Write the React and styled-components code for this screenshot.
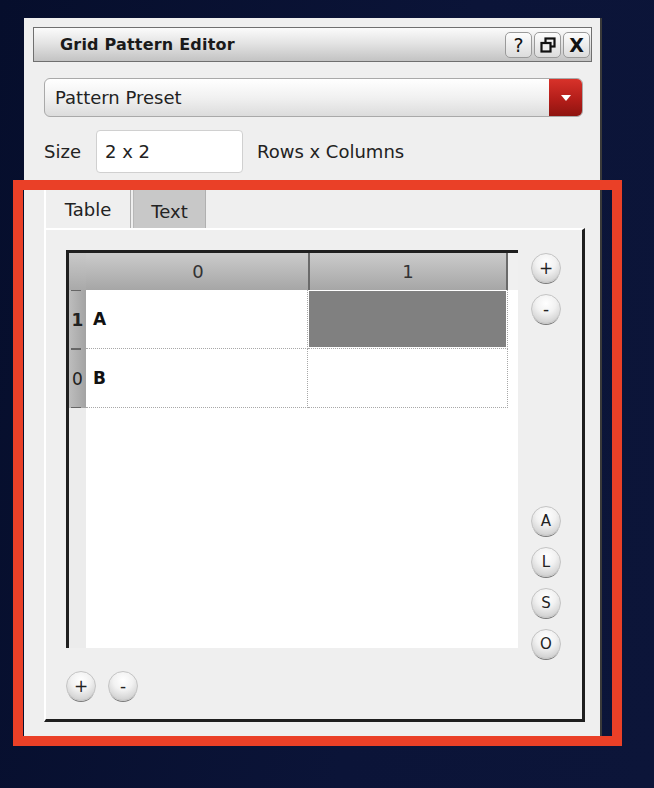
import React from "react";
import styled, { createGlobalStyle } from "styled-components";

const GlobalStyle = createGlobalStyle`
  html, body {
    margin: 0;
    padding: 0;
    min-height: 788px;
    background: linear-gradient(100deg, #060e2c 0%, #0b1438 60%, #0c1539 100%);
    font-family: "DejaVu Sans", "Liberation Sans", sans-serif;
  }
`;

const Page = styled.div`
  position: relative;
  width: 654px;
  height: 788px;
  padding: 18px 0 0 24px;
  box-sizing: border-box;
`;

const Panel = styled.div`
  width: 578px;
  height: 720px;
  box-sizing: border-box;
  background: #efefef;
  border-right: 2px solid #3a3a3a;
  display: flex;
  flex-direction: column;
`;

const TitleBar = styled.div`
  margin: 9px 8px 0 9px;
  height: 35px;
  box-sizing: border-box;
  border: 1px solid #6f6f6f;
  background: linear-gradient(#fbfbfb, #e4e4e4 45%, #c3c3c3);
  display: flex;
  align-items: center;
  padding: 0 1px 0 26px;
`;

const Title = styled.div`
  flex: 1;
  font-weight: bold;
  font-size: 16px;
  color: #1a1a1a;
  letter-spacing: 0.2px;
`;

const TitleButtons = styled.div`
  display: flex;
  gap: 2px;
`;

const TitleButton = styled.div`
  width: 27px;
  height: 26px;
  box-sizing: border-box;
  border: 1px solid #9a9a9a;
  border-radius: 5px;
  background: linear-gradient(#fdfdfd, #dcdcdc);
  display: flex;
  align-items: center;
  justify-content: center;
  font-size: 19px;
  font-weight: ${(p) => (p.$bold ? "bold" : "normal")};
  color: #111;
`;

const Body = styled.div`
  padding: 16px 15px 0 20px;
  display: flex;
  flex-direction: column;
  flex: 1;
`;

const Dropdown = styled.div`
  height: 39px;
  margin-right: 2px;
  box-sizing: border-box;
  border: 1px solid #a9a9a9;
  border-radius: 6px;
  background: linear-gradient(#ffffff, #f1f1f1 50%, #dcdcdc);
  display: flex;
  align-items: stretch;
  overflow: hidden;
`;

const DropdownLabel = styled.div`
  flex: 1;
  display: flex;
  align-items: center;
  padding-left: 10px;
  font-size: 18px;
  color: #222;
`;

const DropdownArrow = styled.div`
  width: 33px;
  background: linear-gradient(#d8322a, #b01c18 60%, #8e1410);
  display: flex;
  align-items: center;
  justify-content: center;
`;

const SizeRow = styled.div`
  margin-top: 13px;
  display: flex;
  align-items: center;
  font-size: 18px;
  color: #222;
`;

const SizeInput = styled.div`
  width: 147px;
  height: 43px;
  box-sizing: border-box;
  margin: 0 14px 0 15px;
  background: #fff;
  border: 1px solid #d0d0d0;
  border-radius: 4px;
  display: flex;
  align-items: center;
  padding-left: 8px;
`;

const Tabs = styled.div`
  margin-top: 17px;
  display: flex;
  gap: 2px;
  height: 38px;
`;

const Tab = styled.div`
  width: ${(p) => p.$w}px;
  box-sizing: border-box;
  display: flex;
  align-items: center;
  justify-content: center;
  font-size: 18px;
  color: #222;
  background: ${(p) => (p.$active ? "#efefef" : "#c8c8c8")};
  border-left: ${(p) => (p.$active ? "2px solid #fff" : "1px solid #b8b8b8")};
  border-right: 1px solid #b0b0b0;
  padding-top: ${(p) => (p.$active ? 0 : 4)}px;
`;

const Pane = styled.div`
  height: 494px;
  box-sizing: border-box;
  border-top: 2px solid #fff;
  border-left: 2px solid #fff;
  border-right: 3px solid #1e1e1e;
  border-bottom: 3px solid #1e1e1e;
  padding: 20px 0 0 20px;
  display: flex;
  flex-direction: column;
`;

const PaneTop = styled.div`
  display: flex;
  gap: 13px;
  height: 398px;
`;

const Table = styled.div`
  width: 452px;
  height: 398px;
  box-sizing: border-box;
  border-top: 3px solid #1f1f1f;
  border-left: 3px solid #1f1f1f;
  background: #fff;
  display: grid;
  grid-template-columns: 17px 222px 200px 10px;
  grid-template-rows: 37px 59px 59px 1fr;
`;

const Corner = styled.div`
  background: linear-gradient(#c9c9c9, #a9a9a9);
`;

const ColHeader = styled.div`
  background: linear-gradient(#cbcbcb, #a6a6a6);
  border-left: 2px solid ${(p) => (p.$first ? "transparent" : "#6a6a6a")};
  border-right: ${(p) => (p.$last ? "2px solid #6a6a6a" : "none")};
  display: flex;
  align-items: center;
  justify-content: center;
  font-size: 18px;
  color: #333;
`;

const HeaderFill = styled.div`
  background: #f0f0f0;
`;

const RowHeader = styled.div`
  position: relative;
  background: linear-gradient(90deg, #bdbdbd, #a3a3a3);
  display: flex;
  align-items: center;
  justify-content: center;
  font-size: 17px;
  font-weight: ${(p) => (p.$bold ? "bold" : "normal")};
  color: #222;
  &::before,
  &::after {
    content: "";
    position: absolute;
    left: 2px;
    width: 10px;
    height: 1px;
    background: #666;
  }
  &::before { top: 0; }
  &::after { bottom: 0; }
`;

const Cell = styled.div`
  box-sizing: border-box;
  border-right: 1px dotted #a8a8a8;
  border-bottom: 1px dotted #a8a8a8;
  display: flex;
  align-items: center;
  padding-left: 7px;
  font-size: 17px;
  font-weight: bold;
  color: #111;
  background: #fff;
`;

const SelectedCell = styled(Cell)`
  padding: 1px;
  & > div {
    width: 100%;
    height: 100%;
    background: #808080;
  }
`;

const RowHeaderFill = styled.div`
  background: #ececec;
`;

const SideButtons = styled.div`
  display: flex;
  flex-direction: column;
  padding-top: 3px;
  height: 409px;
  box-sizing: border-box;
`;

const Spacer = styled.div`
  flex: 1;
`;

const RoundButton = styled.div`
  width: 30px;
  height: 30px;
  margin-bottom: ${(p) => p.$mb || 0}px;
  box-sizing: border-box;
  border-radius: 50%;
  border: 1px solid #c4c4c4;
  background: radial-gradient(circle at 50% 30%, #ffffff 0%, #f2f2f2 40%, #c2c2c2 100%);
  box-shadow: 0 2px 0 -1px #7a7a7a;
  display: flex;
  align-items: center;
  justify-content: center;
  font-size: ${(p) => p.$fs || 17}px;
  color: #222;
  line-height: 1;
`;

const BottomButtons = styled.div`
  margin-top: 23px;
  display: flex;
  gap: 12px;
`;

const Highlight = styled.div`
  position: absolute;
  left: 13px;
  top: 180px;
  width: 609px;
  height: 566px;
  box-sizing: border-box;
  border: 10px solid #ea4027;
  pointer-events: none;
`;

function RestoreIcon() {
  return (
    <svg width="16" height="16" viewBox="0 0 16 16">
      <rect x="5.5" y="1.5" width="9" height="8" fill="none" stroke="#111" strokeWidth="2.2" />
      <rect x="1.5" y="6" width="9" height="8.5" fill="#eee" stroke="#111" strokeWidth="2.2" />
    </svg>
  );
}

function ArrowIcon() {
  return (
    <svg width="12" height="8" viewBox="0 0 12 8">
      <path d="M1 1 L11 1 L6 7 Z" fill="#fff" />
    </svg>
  );
}

export default function App() {
  return (
    <Page>
      <GlobalStyle />
      <Panel>
        <TitleBar>
          <Title>Grid Pattern Editor</Title>
          <TitleButtons>
            <TitleButton>?</TitleButton>
            <TitleButton><RestoreIcon /></TitleButton>
            <TitleButton $bold>X</TitleButton>
          </TitleButtons>
        </TitleBar>
        <Body>
          <Dropdown>
            <DropdownLabel>Pattern Preset</DropdownLabel>
            <DropdownArrow><ArrowIcon /></DropdownArrow>
          </Dropdown>
          <SizeRow>
            Size
            <SizeInput>2 x 2</SizeInput>
            Rows x Columns
          </SizeRow>
          <Tabs>
            <Tab $active $w={87}>Table</Tab>
            <Tab $w={73}>Text</Tab>
          </Tabs>
          <Pane>
            <PaneTop>
              <Table>
                <Corner />
                <ColHeader $first>0</ColHeader>
                <ColHeader $last>1</ColHeader>
                <HeaderFill />
                <RowHeader $bold>1</RowHeader>
                <Cell>A</Cell>
                <SelectedCell><div /></SelectedCell>
                <div />
                <RowHeader>0</RowHeader>
                <Cell>B</Cell>
                <Cell />
                <div />
                <RowHeaderFill />
                <div />
                <div />
                <div />
              </Table>
              <SideButtons>
                <RoundButton $mb={11}>+</RoundButton>
                <RoundButton>-</RoundButton>
                <Spacer />
                <RoundButton $mb={11} $fs={15}>A</RoundButton>
                <RoundButton $mb={11} $fs={15}>L</RoundButton>
                <RoundButton $mb={11} $fs={15}>S</RoundButton>
                <RoundButton $fs={15}>O</RoundButton>
              </SideButtons>
            </PaneTop>
            <BottomButtons>
              <RoundButton>+</RoundButton>
              <RoundButton>-</RoundButton>
            </BottomButtons>
          </Pane>
        </Body>
      </Panel>
      <Highlight />
    </Page>
  );
}
